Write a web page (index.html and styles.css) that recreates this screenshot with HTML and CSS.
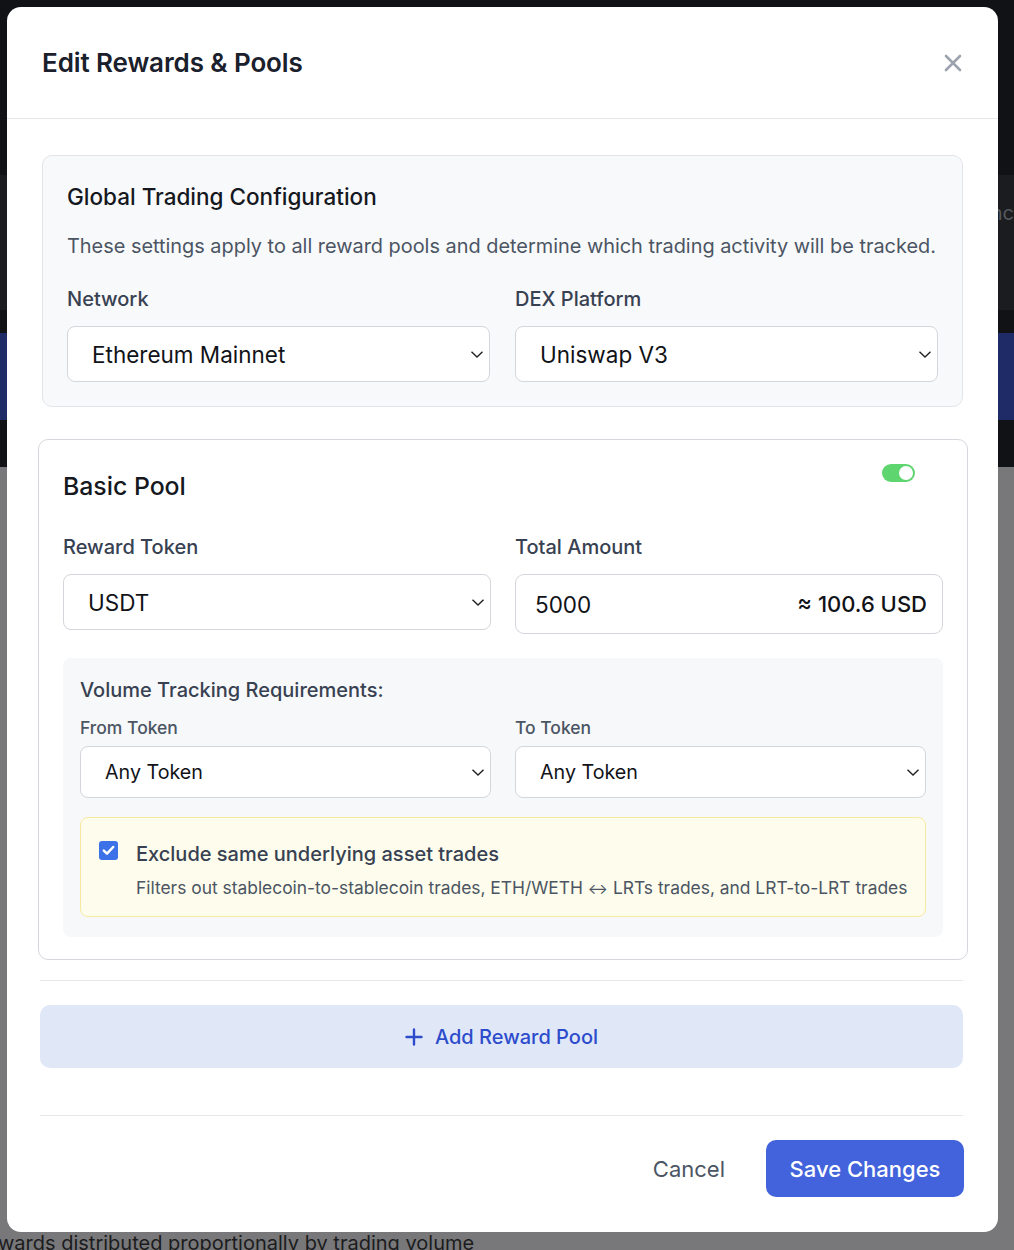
FILE: index.html
```html
<!DOCTYPE html>
<html lang="en">
<head>
<meta charset="utf-8">
<title>Edit Rewards &amp; Pools</title>
<link rel="stylesheet" href="styles.css">
</head>
<body>
<div class="backdrop">
  <div class="bg-dark bg-top"></div>
  <div class="bg-band"><span class="bg-peek">nc</span></div>
  <div class="bg-dark bg-gap1"></div>
  <div class="bg-blue"></div>
  <div class="bg-dark bg-gap2"></div>
  <div class="bg-gray">
    <p class="bg-text">wards distributed proportionally by trading volume</p>
  </div>
</div>

<div class="modal" role="dialog">
  <header class="modal-header">
    <h1 class="modal-title">Edit Rewards &amp; Pools</h1>
    <button class="close-btn" aria-label="Close">
      <svg width="20" height="20" viewBox="0 0 20 20"><path d="M3 3 L17 17 M17 3 L3 17" stroke="#9ca3af" stroke-width="2.6" stroke-linecap="round" fill="none"/></svg>
    </button>
  </header>

  <div class="modal-body">
    <section class="global-card">
      <h2 class="card-title">Global Trading Configuration</h2>
      <p class="card-desc">These settings apply to all reward pools and determine which trading activity will be tracked.</p>
      <div class="grid2">
        <div class="field">
          <label class="label">Network</label>
          <div class="select">
            <span>Ethereum Mainnet</span>
            <svg class="chev" width="14" height="9" viewBox="0 0 14 9"><path d="M1.5 1.8 L7 7 L12.5 1.8" stroke="#222" stroke-width="1.4" fill="none"/></svg>
          </div>
        </div>
        <div class="field">
          <label class="label">DEX Platform</label>
          <div class="select">
            <span>Uniswap V3</span>
            <svg class="chev" width="14" height="9" viewBox="0 0 14 9"><path d="M1.5 1.8 L7 7 L12.5 1.8" stroke="#222" stroke-width="1.4" fill="none"/></svg>
          </div>
        </div>
      </div>
    </section>

    <section class="pool-card">
      <div class="pool-head">
        <h2 class="pool-title">Basic Pool</h2>
        <span class="toggle"><span class="knob"></span></span>
      </div>
      <div class="grid2 pool-grid">
        <div class="field">
          <label class="label">Reward Token</label>
          <div class="select">
            <span>USDT</span>
            <svg class="chev" width="14" height="9" viewBox="0 0 14 9"><path d="M1.5 1.8 L7 7 L12.5 1.8" stroke="#222" stroke-width="1.4" fill="none"/></svg>
          </div>
        </div>
        <div class="field">
          <label class="label">Total Amount</label>
          <div class="amount">
            <span>5000</span>
            <span class="usd">≈ 100.6 USD</span>
          </div>
        </div>
      </div>

      <div class="volume">
        <h3 class="volume-title">Volume Tracking Requirements:</h3>
        <div class="grid2 vol-grid">
          <div class="field">
            <label class="small-label">From Token</label>
            <div class="select select-sm">
              <span>Any Token</span>
              <svg class="chev" width="14" height="9" viewBox="0 0 14 9"><path d="M1.5 1.8 L7 7 L12.5 1.8" stroke="#222" stroke-width="1.4" fill="none"/></svg>
            </div>
          </div>
          <div class="field">
            <label class="small-label">To Token</label>
            <div class="select select-sm">
              <span>Any Token</span>
              <svg class="chev" width="14" height="9" viewBox="0 0 14 9"><path d="M1.5 1.8 L7 7 L12.5 1.8" stroke="#222" stroke-width="1.4" fill="none"/></svg>
            </div>
          </div>
        </div>
        <div class="exclude">
          <span class="checkbox">
            <svg width="13" height="11" viewBox="0 0 13 11"><path d="M1.8 5.6 L5 8.7 L11.2 2" stroke="#fff" stroke-width="2.5" fill="none" stroke-linecap="round" stroke-linejoin="round"/></svg>
          </span>
          <div class="exclude-text">
            <div class="exclude-title">Exclude same underlying asset trades</div>
            <div class="exclude-desc">Filters out stablecoin-to-stablecoin trades, ETH/WETH <span class="arrow">↔</span> LRTs trades, and LRT-to-LRT trades</div>
          </div>
        </div>
      </div>
    </section>

    <hr class="divider divider-1">

    <button class="add-btn">
      <svg width="18" height="18" viewBox="0 0 18 18"><path d="M9 1.5 V16.5 M1.5 9 H16.5" stroke="#2d4ccc" stroke-width="2.4" stroke-linecap="round"/></svg>
      <span>Add Reward Pool</span>
    </button>

    <hr class="divider divider-2">

    <footer class="modal-footer">
      <button class="cancel-btn">Cancel</button>
      <button class="save-btn">Save Changes</button>
    </footer>
  </div>
</div>
</body>
</html>
```

FILE: styles.css
```css
* { box-sizing: border-box; }
html, body { margin: 0; padding: 0; }
body {
  width: 1014px;
  height: 1250px;
  overflow: hidden;
  position: relative;
  font-family: Inter, "Noto Sans", "Liberation Sans", sans-serif;
  background: #78787a;
}

/* backdrop (dimmed page) */
.backdrop { width: 1014px; height: 1250px; display: flex; flex-direction: column; }
.bg-dark { background: #101216; }
.bg-top { height: 175px; }
.bg-band { height: 135px; background: #1a1c20; display: flex; justify-content: flex-end; align-items: flex-start; padding-top: 26px; }
.bg-peek { color: #55585e; font-size: 20px; margin-right: 0; }
.bg-gap1 { height: 23px; }
.bg-blue { height: 87px; background: #1f2b66; }
.bg-gap2 { height: 47px; }
.bg-gray { flex: 1; background: #78787a; display: flex; flex-direction: column; justify-content: flex-end; }
.bg-text { margin: 0 0 -5px -2px; font-size: 20px; color: #1c1c1e; line-height: 24px; white-space: nowrap; }

/* modal */
.modal {
  position: absolute;
  top: 7px;
  left: 7px;
  width: 991px;
  height: 1225px;
  background: #fff;
  border-radius: 14px;
  overflow: hidden;
}
.modal-header {
  height: 112px;
  border-bottom: 1px solid #e5e7eb;
  display: flex;
  align-items: center;
  justify-content: space-between;
  padding: 0 35px 0 35px;
}
.modal-title { margin: 0; font-size: 26px; font-weight: 600; color: #1a202c; letter-spacing: -0.1px; }
.close-btn { border: 0; background: none; padding: 0; width: 20px; height: 20px; display: flex; }

.modal-body { padding: 36px 35px 0 35px; }

/* global card */
.global-card {
  background: #f8f9fb;
  border: 1px solid #e2e4e9;
  border-radius: 10px;
  padding: 27px 24px 24px 24px;
}
.card-title { margin: 0; font-size: 22.5px; line-height: 28px; font-weight: 500; color: #15181e; }
.card-desc { margin: 21px 0 0 0; font-size: 19.9px; line-height: 28px; color: #4b5563; white-space: nowrap; }
.grid2 { display: grid; grid-template-columns: 1fr 1fr; column-gap: 25px; }
.global-card .grid2 { margin-top: 26px; }
.field { display: flex; flex-direction: column; }
.label { font-size: 20px; line-height: 26px; font-weight: 500; color: #374151; }
.select {
  margin-top: 14px;
  height: 56px;
  background: #fff;
  border: 1px solid #d4d6db;
  border-radius: 8px;
  display: flex;
  align-items: center;
  justify-content: space-between;
  padding: 0 5px 0 24px;
  font-size: 22.5px;
  color: #111318;
}
.chev { flex: none; }

/* pool card */
.pool-card {
  margin: 32px -5px 0 -4px;
  border: 1px solid #d5d7dc;
  border-radius: 10px;
  padding: 31px 24px 22px 24px;
}
.pool-head { display: flex; justify-content: space-between; align-items: flex-start; }
.pool-title { margin: 0; font-size: 24.8px; line-height: 30px; font-weight: 500; color: #15181e; }
.toggle {
  margin-top: -7px;
  margin-right: 28px;
  width: 33px;
  height: 18px;
  border-radius: 9px;
  background: #5fd56f;
  display: flex;
  align-items: center;
  justify-content: flex-end;
  padding-right: 2px;
}
.knob { width: 14px; height: 14px; border-radius: 50%; background: #fff; }
.pool-grid { margin-top: 33px; column-gap: 24px; }
.amount {
  margin-top: 14px;
  height: 60px;
  border: 1px solid #d4d6db;
  border-radius: 9px;
  display: flex;
  align-items: center;
  justify-content: space-between;
  padding: 0 15px 0 19px;
  font-size: 22.5px;
  color: #111318;
}
.usd { font-size: 22px; font-weight: 500; }

.volume {
  margin-top: 24px;
  background: #f7f8fa;
  border-radius: 8px;
  padding: 19px 17px 20px 17px;
}
.volume-title { margin: 0; font-size: 20px; line-height: 26px; font-weight: 500; color: #374151; }
.vol-grid { margin-top: 14px; column-gap: 24px; }
.small-label { font-size: 17.5px; line-height: 22px; font-weight: 500; color: #4b5563; }
.select-sm { margin-top: 7px; height: 52px; font-size: 19.7px; }

.exclude {
  margin-top: 19px;
  background: #fefcec;
  border: 1px solid #f7e99d;
  border-radius: 8px;
  padding: 23px 16px 16px 18px;
  display: flex;
  align-items: flex-start;
  gap: 18px;
}
.checkbox {
  width: 19px;
  height: 19px;
  border-radius: 3px;
  background: #3d71e8;
  display: flex;
  align-items: center;
  justify-content: center;
  flex: none;
}
.exclude-title { font-size: 20px; line-height: 26px; font-weight: 500; color: #374151; }
.exclude-desc { margin-top: 10px; font-size: 17.4px; line-height: 22px; color: #4b5563; white-space: nowrap; }
.arrow { font-size: 15px; }

.divider { border: 0; border-top: 1px solid #e5e7eb; margin: 0; }
.divider-1 { margin: 20px 0 0 -2px; }
.add-btn {
  margin: 24px 0 0 -2px;
  width: calc(100% + 2px);
  height: 63px;
  border: 0;
  border-radius: 10px;
  background: #e0e8f8;
  color: #2d4ccc;
  font-family: inherit;
  font-size: 20px;
  font-weight: 500;
  display: flex;
  align-items: center;
  justify-content: center;
  gap: 12px;
}
.divider-2 { margin: 47px 0 0 -2px; }

.modal-footer {
  margin-top: 24px;
  display: flex;
  justify-content: flex-end;
  align-items: center;
  gap: 41px;
}
.cancel-btn {
  border: 0;
  background: none;
  font-family: inherit;
  font-size: 22px;
  color: #4b5563;
  padding: 0;
}
.save-btn {
  border: 0;
  height: 57px;
  width: 198px;
  border-radius: 10px;
  background: #4263db;
  color: #fff;
  font-family: inherit;
  font-size: 22px;
  font-weight: 500;
  margin-right: -1px;
}
```
